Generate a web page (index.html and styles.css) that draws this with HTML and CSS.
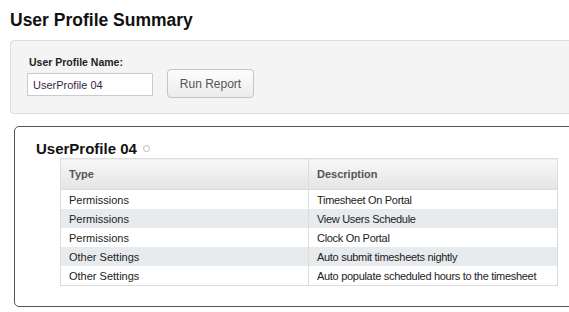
FILE: index.html
```html
<!DOCTYPE html>
<html lang="en">
<head>
    <meta charset="UTF-8">
    <title>User Profile Summary</title>
    <link rel="stylesheet" href="styles.css">
</head>
<body>
    <h1 class="page-title">User Profile Summary</h1>

    <div class="filter-panel">
        <div class="field">
            <label for="profile-name">User Profile Name:</label>
            <input id="profile-name" type="text" value="UserProfile 04">
        </div>
        <button class="run-btn">Run Report</button>
    </div>

    <div class="report-panel">
        <h2 class="report-title">UserProfile 04 <span class="dot"></span></h2>
        <table class="report-table">
            <thead>
                <tr>
                    <th class="col-type">Type</th>
                    <th>Description</th>
                </tr>
            </thead>
            <tbody>
                <tr><td>Permissions</td><td class="desc">Timesheet On Portal</td></tr>
                <tr><td>Permissions</td><td class="desc">View Users Schedule</td></tr>
                <tr><td>Permissions</td><td class="desc">Clock On Portal</td></tr>
                <tr><td>Other Settings</td><td class="desc">Auto submit timesheets nightly</td></tr>
                <tr><td>Other Settings</td><td class="desc">Auto populate scheduled hours to the timesheet</td></tr>
            </tbody>
        </table>
    </div>
</body>
</html>
```

FILE: styles.css
```css
body {
    margin: 0;
    padding: 0;
    background-color: #fff;
    color: #222;
    font-family: "Liberation Sans", Arial, sans-serif;
    overflow: hidden;
}

.page-title {
    margin: 0;
    padding: 9px 0 0 10px;
    font-size: 17.5px;
    line-height: 22px;
    color: #111;
}

.filter-panel {
    margin: 9px -20px 0 10px;
    height: 74px;
    box-sizing: border-box;
    background-color: #f4f4f4;
    border: 1px solid #dcdcdc;
    border-radius: 4px;
    padding: 15px 0 0 16px;
    display: flex;
    align-items: flex-start;
    gap: 14px;
}

.field {
    display: flex;
    flex-direction: column;
    gap: 4px;
}

.field label {
    font-size: 10.5px;
    line-height: 13px;
    font-weight: bold;
    color: #222;
    padding-left: 2px;
}

.field input {
    width: 126px;
    height: 23px;
    box-sizing: border-box;
    border: 1px solid #ccc;
    background-color: #fff;
    padding: 0 5px;
    font-family: inherit;
    font-size: 11px;
    color: #3b1f4a;
    margin: 0;
}

.run-btn {
    width: 87px;
    height: 29px;
    margin-top: 13px;
    border: 1px solid #c4c4c4;
    border-radius: 4px;
    background: linear-gradient(#fdfdfd, #ececec);
    color: #555;
    font-family: inherit;
    font-size: 12px;
    cursor: pointer;
}

.report-panel {
    margin: 12px -20px 0 14px;
    height: 181px;
    box-sizing: border-box;
    border: 1px solid #555;
    border-radius: 5px;
    padding: 13px 0 0 21px;
}

.report-title {
    margin: 0;
    font-size: 15px;
    line-height: 18px;
    color: #111;
}

.dot {
    display: inline-block;
    width: 5px;
    height: 5px;
    margin-left: 2px;
    border: 1px solid #bbb;
    border-radius: 50%;
    vertical-align: 2px;
}

.report-table {
    margin-left: 24px;
    width: 498px;
    border-collapse: collapse;
    font-size: 11px;
}

.report-table th {
    height: 30px;
    text-align: left;
    padding: 0 8px;
    font-weight: bold;
    color: #555;
    background: linear-gradient(#f8f8f8, #e4e4e4);
    border: 1px solid #dcdcdc;
}

.report-table .col-type {
    width: 231px;
}

.report-table td {
    height: 19px;
    padding: 0 8px;
    color: #222;
    white-space: nowrap;
    border-left: 1px solid #dcdcdc;
    border-right: 1px solid #dcdcdc;
}

.report-table td.desc {
    letter-spacing: -0.3px;
}

.report-table tbody tr:nth-child(even) td {
    background-color: #e8ebee;
}

.report-table tbody tr:last-child td {
    border-bottom: 1px solid #dcdcdc;
}
```
